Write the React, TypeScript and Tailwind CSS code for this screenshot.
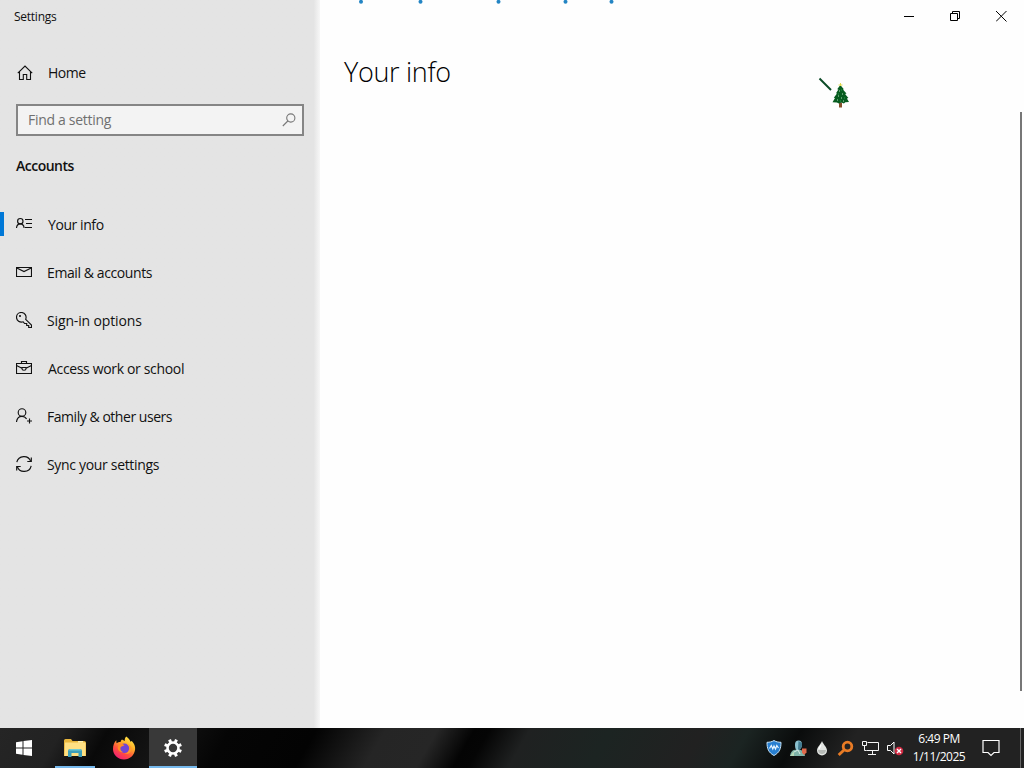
import type { ReactNode } from 'react';

interface NavItem {
  label: string;
  icon: ReactNode;
  // the label's own start and tracking
  text: string;
}

const NAV_ITEMS: NavItem[] = [
  {
    label: 'Your info',
    text: 'pl-4 tracking-[-0.42px]',
    icon: (
      <>
        <circle cx="4.3" cy="5.2" r="2.7" />
        <path d="M0.5 12C0.7 9.6 2.2 7.9 4.3 7.9S7.9 9.6 8.1 12" />
        <path d="M9 3.5h7M10 7.5h6M9 11.5h7" />
      </>
    ),
  },
  {
    label: 'Email & accounts',
    text: 'pl-[15px] tracking-[-0.4px]',
    icon: (
      <>
        <path d="M0.5 3.5h15v9H0.5z" />
        <path d="M0.8 4L8 7.6 15.2 4" />
      </>
    ),
  },
  {
    label: 'Sign-in options',
    text: 'pl-[15px] tracking-[-0.14px]',
    icon: (
      <>
        <path d="M9.7 7.3L15.5 13v2.5h-2.8v-2h-2v-2H8.6L7.2 9.8C3.8 10.8.5 8.6.5 5.3.5 2.6 2.6.5 5.3.5 8.8.5 11 4 9.7 7.3z" />
        <circle cx="4" cy="4" r="0.5" />
      </>
    ),
  },
  {
    label: 'Access work or school',
    text: 'pl-4 tracking-[-0.34px]',
    icon: (
      <>
        <path d="M0.5 3.5h15v10H0.5z" />
        <path d="M5.5 3.5v-2h5v2" />
        <path d="M0.5 5.5L6 8.2M10 8.2l5.5-2.7M6 7.5h4v1.2a2 1.5 0 0 1-4 0z" />
      </>
    ),
  },
  {
    label: 'Family & other users',
    text: 'pl-[15px] tracking-[-0.46px]',
    icon: (
      <>
        <circle cx="6" cy="4.5" r="3.8" />
        <path d="M0.5 14C0.8 10.6 3 8.3 6 8.3c2 0 3.6 1 4.6 2.6" />
        <path d="M13.5 10.5v5M11 13h5" />
      </>
    ),
  },
  {
    label: 'Sync your settings',
    text: 'pl-[15px] tracking-[-0.32px]',
    icon: (
      <>
        <path d="M0.8 6.2A7.3 7.3 0 0 1 14.8 5.5M15.2 9.8A7.3 7.3 0 0 1 1.2 10.5" />
        <path d="M15.3 1.5v4h-4M0.7 14.5v-4h4" />
      </>
    ),
  },
];

function LineIcon({ children }: { children: ReactNode }) {
  return (
    <svg width="16" height="16" viewBox="0 0 16 16" fill="none" stroke="#111" strokeWidth="1.15">
      {children}
    </svg>
  );
}

function Sidebar() {
  return (
    <aside className="w-80 h-full bg-gradient-to-r from-[#e4e4e4] from-98% to-[#f7f7f7]">
      <div className="h-8 pl-3.5 pt-[9px] text-xs leading-4 tracking-[-0.25px]">Settings</div>

      <div className="flex items-center pl-[17px] pt-[21px] h-[61px]">
        <svg width="16" height="16" viewBox="0 0 16 16" fill="none" stroke="#111" strokeWidth="1.1">
          <path d="M0.8 8.2L8 1l7.2 7.2M2.5 6.8v7.7h3.8V9.5h3.4v5h3.8V6.8" />
        </svg>
        <span className="pl-[15px] text-sm leading-5 tracking-[-0.5px]">Home</span>
      </div>

      <div className="mt-[11px] ml-4 w-72 h-8 flex items-center justify-between border-2 border-[#858585] bg-[#f3f3f3] pl-2.5 pr-1.5">
        <span className="text-sm leading-5 tracking-[-0.3px] text-[#707070]">Find a setting</span>
        <svg width="14" height="14" viewBox="0 0 14 14" fill="none" stroke="#777" strokeWidth="1.1">
          <circle cx="8.8" cy="5" r="4.1" />
          <path d="M5.8 8L0.8 13" />
        </svg>
      </div>

      <h2 className="pt-5 pl-4 text-sm leading-5 font-semibold tracking-[-0.5px]">Accounts</h2>

      <nav className="pt-6">
        {NAV_ITEMS.map((item, i) => (
          <div key={item.label} className="h-12 flex items-center">
            <div className={i === 0 ? 'w-1 h-6 bg-[#0078d7]' : 'w-1 h-6'} />
            <div className="pl-3">
              <LineIcon>{item.icon}</LineIcon>
            </div>
            <span className={`pt-0.5 text-sm leading-5 whitespace-nowrap ${item.text}`}>{item.label}</span>
          </div>
        ))}
      </nav>
    </aside>
  );
}

function CaptionButtons() {
  return (
    <div className="flex justify-end text-black">
      {['M0 5.5h10', 'M0.5 2.5h7v7h-7zM2.5 2.5v-2h7v7h-2', 'M0 0l10.5 10.5M10.5 0L0 10.5'].map((d) => (
        <div key={d} className="w-[46px] h-8 flex items-center justify-center">
          <svg width="11" height="11" viewBox="0 0 11 11" fill="none" stroke="currentColor">
            <path d={d} />
          </svg>
        </div>
      ))}
    </div>
  );
}

// Busy indicator, half hidden by the window's top edge
function ProgressDots() {
  return (
    <svg className="absolute left-0 top-0" width="320" height="5">
      {[41, 100.5, 178.5, 245.5, 291.5].map((x) => (
        <circle key={x} cx={x} cy="1.8" r="2" fill="#2385c4" />
      ))}
    </svg>
  );
}

function TreeCursor() {
  return (
    <svg className="absolute left-[818px] top-[76px]" width="34" height="34" viewBox="0 0 34 34">
      <path d="M1.5 2.5L13 14" stroke="#0b4a26" strokeWidth="1.9" />
      <path d="M21 31.5v-5h3v5z" fill="#86502d" />
      <path
        d="M22.3 9l3.6 4.2-1 .3 3.6 4-1.4.5 3.3 4-1.5.5 2.1 3.5-3.7.3-1.4 1.2-2.5-1-2.5 1-2-1-4.4-.2L17 22l-1.2-.3 3.2-4.2-1-.2 2.4-3.8-1.2-.3z"
        fill="#075c20"
      />
      <path d="M20.5 9h4M22.5 7v3" stroke="#e2d94e" />
      <path d="M21 15h1M24 18h1M20 20h1M23 22h1M19 24h1M25 25h1" stroke="#b5dfbd" />
      <path d="M23 14h1M20 18h1M26 22h1M22 25h1" stroke="#29964a" />
    </svg>
  );
}

function ExplorerIcon() {
  return (
    <svg width="22" height="20" viewBox="0 0 22 20">
      <path d="M0 2.5Q0 1 1.5 1H7l1.5 2H20q2 0 2 2v13H0z" fill="#e8b63d" />
      <path d="M1 4.5h20.5V18H0.5z" fill="#ffe083" />
      <path d="M14 3h5v1.5h-5z" fill="#fff2b5" />
      <path d="M4 19v-6q0-2 2-2h10q2 0 2 2v6h-3.5v-4h-7v4z" fill="#3d9fb9" />
      <path d="M4.5 12.5Q5 11 6.5 11h9q1.8 0 2 1.5z" fill="#71cbd2" />
    </svg>
  );
}

function FirefoxIcon() {
  return (
    <svg width="24" height="24" viewBox="0 0 24 24">
      <defs>
        <linearGradient id="flame" x1="0.8" y1="0" x2="0.2" y2="1">
          <stop offset="0" stopColor="#fff04a" />
          <stop offset="0.35" stopColor="#ffad28" />
          <stop offset="0.65" stopColor="#ff4f3e" />
          <stop offset="1" stopColor="#ee187b" />
        </linearGradient>
      </defs>
      <path
        d="M14.2 0.5c2.4 1.4 3.6 3.5 4.3 5.2l1.3-.8c2.4 2.5 3.7 5.5 3.3 8.6-.7 5.7-5.3 10-11.1 10S1 19 1 13.2C1 9.5 2 6.5 4.3 4.3l.2 3C5.8 6.5 7 6 8.5 6c.3-1 .7-1.7 1.5-2.4L12.8 5c-.2-1.7.2-3.2 1.4-4.5z"
        fill="url(#flame)"
      />
      <circle cx="12.4" cy="12.3" r="4.8" fill="#7145d5" />
      <path d="M7 8.2c2-1 4-.6 5.5 1-1 .9-2.5.8-3.4 1.6-1.4 1.3-.6 4.6 2.4 5.5-3 .5-6-1.7-5.8-4.8z" fill="#ff8b25" />
      <path d="M15 8c2.2 1.5 3 4 2 6.3-.9 2.2-2.5 3.2-4.6 3.2 4.2 1.2 7.5-1.6 7.2-5.3-.2-2-2.2-3.7-4.6-4.2z" fill="#ff9b2b" />
    </svg>
  );
}

function GearIcon() {
  return (
    <svg width="20" height="20" viewBox="0 0 20 20" fill="none" stroke="#fff">
      <circle cx="10" cy="10" r="5.5" strokeWidth="2.6" />
      {[22.5, 67.5, 112.5, 157.5, 202.5, 247.5, 292.5, 337.5].map((a) => (
        <path key={a} d="M10 1v3" strokeWidth="3" transform={`rotate(${a} 10 10)`} />
      ))}
    </svg>
  );
}

function Tray() {
  return (
    <div className="flex items-center gap-2">
      <svg width="16" height="16" viewBox="0 0 16 16">
        <path d="M8 .5c2 1.3 4.3 1.8 7 1.8 0 6.2-1.4 10.3-7 13.2C2.4 12.6 1 8.5 1 2.3c2.7 0 5-.5 7-1.8z" fill="#287fd0" stroke="#c6e5fa" />
        <path d="M3.5 8.5l1.8-3L6.8 9 8 6l1.5 3 1.3-3.5 1.7 2.5" fill="none" stroke="#e9f6ff" strokeWidth="1.2" />
      </svg>
      <svg width="17" height="17" viewBox="0 0 17 17">
        <path d="M0 16c.5-3.6 2-6 5-6.3h5c3 .5 4.5 2.6 5 6.3z" fill="#7fb3a8" />
        <path d="M5 4.5Q5 .5 8.5.5T12 4.5 8.5 10 5 4.5z" fill="#8bc0ce" />
        <path d="M8.5 1L12 3v3l-2 3.5H8z" fill="#427b91" />
        <path d="M4 12l4-2 2 4" fill="none" stroke="#d9ece5" />
        <path d="M12 8.5h4.5v4L14 15l-2-2.5z" fill="#e06a4c" />
        <path d="M0 16l4-5v5z" fill="#b4d7b5" />
      </svg>
      <svg width="14" height="16" viewBox="0 0 14 16">
        <path d="M7 1C6 4 2 7.2 2 10.5a5 5 0 0 0 10 0C12 7.2 8 4 7 1z" fill="#e2e5e2" />
        <path d="M3 10h8c-.5 3-2 4-4 4s-3.5-1-4-4z" fill="#b6bab6" />
        <path d="M6 5L4 9" stroke="#fff" strokeWidth="1.3" />
      </svg>
      <svg width="17" height="17" viewBox="0 0 17 17" fill="none" stroke="#e87b25">
        <circle cx="10.5" cy="6.5" r="4.3" strokeWidth="2.8" />
        <path d="M7 10l-5.3 5" strokeWidth="3" />
      </svg>
      <svg width="17" height="16" viewBox="0 0 17 16" fill="none" stroke="#f5f5f5">
        <path d="M5.5 2.5h11v8h-12M10.5 10.5v4M6 14.5h8" />
        <path d="M0.5 1.5h4v4h-4zM2.5 5.5v5h2" />
      </svg>
      <svg width="17" height="16" viewBox="0 0 17 16" fill="none">
        <path d="M.5 5.5h3l3.5-3.5v12l-3.5-3.5h-3z" stroke="#fff" />
        <circle cx="12" cy="11" r="4.3" fill="#d12b43" />
        <path d="M10 9l4 4M14 9l-4 4" stroke="#fff" strokeWidth="1.4" />
      </svg>
    </div>
  );
}

function Taskbar() {
  return (
    <footer className="h-10 flex items-stretch text-white bg-[linear-gradient(120deg,#252525_0px,#222_55px,#090909_95px,#141414_145px,#050505_200px,#030303_275px,#252525_335px,#262626_380px,#040404_412px,#050505_425px,#1f2121_460px,#1c2422_530px,#212121_610px,#1b2422_650px,#0a0c0c_695px,#222_745px,#222_897px)]">
      <div className="w-12 flex items-center justify-center">
        <svg width="16" height="16" viewBox="0 0 16 16" fill="#fff">
          <path d="M0 2.2l6.5-.9v6.2H0zM7.5 1.1L16 0v7.5H7.5zM0 8.5h6.5v6.2L0 13.8zM7.5 8.5H16V16l-8.5-1.1z" />
        </svg>
      </div>
      <div className="ml-[3px] w-12 flex flex-col items-center">
        <div className="h-[38px] flex items-center pt-0.5">
          <ExplorerIcon />
        </div>
        <div className="w-10 h-0.5 bg-[#76b9ed]" />
      </div>
      <div className="w-[50px] flex items-center justify-center">
        <FirefoxIcon />
      </div>
      <div className="w-12 flex flex-col items-center bg-[#393939]">
        <div className="h-[38px] flex items-center pt-0.5">
          <GearIcon />
        </div>
        <div className="w-12 h-0.5 bg-[#76b9ed]" />
      </div>
      <div className="ml-auto flex items-center">
        <Tray />
        <div className="w-[70px] text-center text-xs leading-[18px] tracking-[-0.5px]">
          <div>6:49 PM</div>
          <div>1/11/2025</div>
        </div>
        <div className="w-[46px] pl-2">
          <svg width="18" height="18" viewBox="0 0 18 18" fill="none" stroke="#fff" strokeWidth="1.2">
            <path d="M1 1.5h16v12h-5L9 16.5l-3-3H1z" />
          </svg>
        </div>
        <div className="w-1 h-10 border-l border-[#666]" />
      </div>
    </footer>
  );
}

export default function App() {
  return (
    <div className="relative w-[1024px] h-[768px] overflow-hidden flex flex-col bg-[#fefefe] text-[#111] font-['Open_Sans',sans-serif]">
      <div className="h-[728px] flex">
        <Sidebar />
        <main className="relative flex-1 flex flex-col">
          <ProgressDots />
          <CaptionButtons />
          <h1 className="pl-6 pt-[22px] text-[27px] leading-9 font-light tracking-[-0.3px] text-black">Your info</h1>
          <div className="mt-[22px] ml-auto mr-0.5 w-0.5 h-[579px] bg-[#777]" />
        </main>
      </div>
      <Taskbar />
      <TreeCursor />
    </div>
  );
}
